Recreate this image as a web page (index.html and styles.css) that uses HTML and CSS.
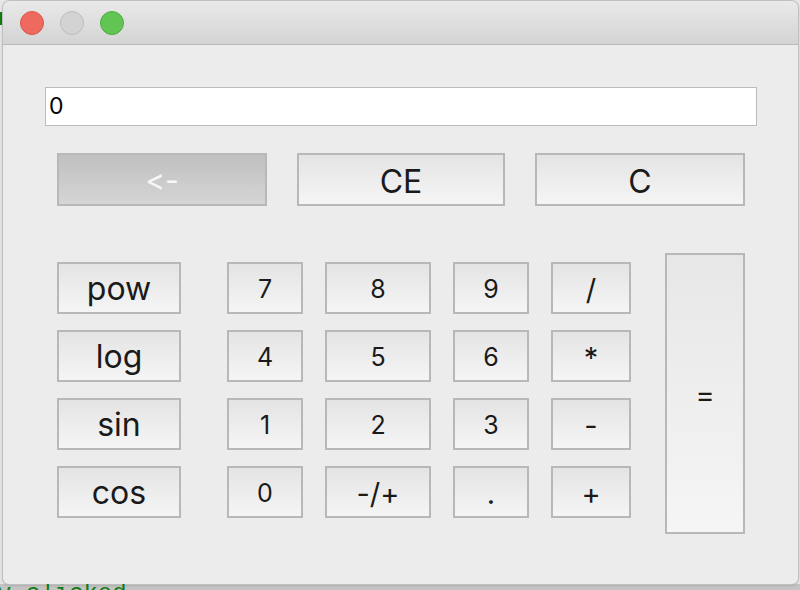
FILE: index.html
```html
<!DOCTYPE html>
<html>
<head>
<meta charset="utf-8">
<link rel="stylesheet" href="styles.css">
</head>
<body>
<div class="stage">
  <div class="gutter"><span class="mark"></span></div>
  <div class="window">
    <div class="titlebar">
      <span class="light red"></span>
      <span class="light gray"></span>
      <span class="light green"></span>
    </div>
    <div class="content">
      <div class="display">0</div>
      <div class="keys">
        <div class="toprow">
          <button class="btn back">&lt;-</button>
          <button class="btn big">CE</button>
          <button class="btn big">C</button>
        </div>
        <div class="keypad">
          <div class="fncol">
            <button class="btn fn">pow</button>
            <button class="btn fn">log</button>
            <button class="btn fn">sin</button>
            <button class="btn fn">cos</button>
          </div>
          <div class="numpad">
            <button class="btn num">7</button>
            <button class="btn num">8</button>
            <button class="btn num">9</button>
            <button class="btn num op">/</button>
            <button class="btn num">4</button>
            <button class="btn num">5</button>
            <button class="btn num">6</button>
            <button class="btn num op">*</button>
            <button class="btn num">1</button>
            <button class="btn num">2</button>
            <button class="btn num">3</button>
            <button class="btn num op">-</button>
            <button class="btn num">0</button>
            <button class="btn num op">-/+</button>
            <button class="btn num op">.</button>
            <button class="btn num op">+</button>
          </div>
          <button class="btn num op equals">=</button>
        </div>
      </div>
    </div>
  </div>
</div>
<div class="strip"><span class="code">y_clicked</span></div>
</body>
</html>
```

FILE: styles.css
```css
* { box-sizing: border-box; }
html, body { margin: 0; padding: 0; }
body {
  width: 800px;
  height: 590px;
  overflow: hidden;
  background: #e6e6e6;
  font-family: Inter, "Liberation Sans", sans-serif;
  font-feature-settings: "calt" 0, "liga" 0;
  font-variant-ligatures: none;
}
.stage {
  display: flex;
  align-items: flex-start;
  height: 584px;
}
.gutter {
  width: 3px;
  flex: none;
  padding-top: 12px;
}
.mark {
  display: block;
  width: 3px;
  height: 13px;
  background: #0f7d12;
}
.window {
  margin-top: 1px;
  width: 795px;
  height: 583px;
  background: #ececec;
  border-radius: 7px 7px 6px 6px;
  box-shadow: 0 0 0 1px #bfbfbf, 0 1px 3px rgba(0,0,0,0.25);
  overflow: hidden;
}
.titlebar {
  height: 44px;
  border-bottom: 1px solid #b9b9b9;
  background: linear-gradient(#e9e9e9, #d4d4d4);
  display: flex;
  align-items: center;
  gap: 16px;
  padding: 0 0 0 17px;
}
.light {
  width: 24px;
  height: 24px;
  border-radius: 50%;
  display: block;
}
.red { background: #ef6a5e; border: 1px solid #d9584d; }
.gray { background: #d3d3d3; border: 1px solid #bcbcbc; }
.green { background: #61c554; border: 1px solid #50ab42; }

.content {
  padding: 42px 41px 0 42px;
}
.display {
  height: 39px;
  background: #fff;
  border: 1px solid #bcbcbc;
  font-size: 23px;
  line-height: 37px;
  padding-left: 3px;
  color: #000;
}
.keys {
  padding: 0 12px;
  margin-top: 27px;
}
.toprow {
  display: grid;
  grid-template-columns: 210px 208px 210px;
  column-gap: 30px;
}
.btn {
  margin: 0;
  padding: 0;
  border: 2px solid #b8b8b8;
  border-radius: 0;
  background: linear-gradient(#e4e4e4, #f5f5f5);
  color: #1a1a1a;
  font-family: Inter, "Liberation Sans", sans-serif;
  font-feature-settings: "calt" 0, "liga" 0;
  font-variant-ligatures: none;
  display: flex;
  align-items: center;
  justify-content: center;
}
.toprow .btn { height: 53px; }
.big { font-size: 32px; padding-top: 3px; }
.back {
  background: linear-gradient(#c0c0c0, #d5d5d5);
  color: #f7f7f7;
  font-size: 30px;
  padding-top: 1px;
}
.keypad {
  display: flex;
  align-items: flex-start;
  margin-top: 47px;
}
.fncol {
  width: 124px;
  display: flex;
  flex-direction: column;
  gap: 16px;
  margin-top: 9px;
}
.fn {
  height: 52px;
  font-size: 32px;
  padding-top: 1px;
}
.numpad {
  margin-left: 46px;
  margin-top: 9px;
  display: grid;
  grid-template-columns: 76px 106px 76px 80px;
  grid-auto-rows: 52px;
  gap: 16px 22px;
}
.num { font-size: 25px; padding-top: 2px; }
.op { font-size: 29px; }
.equals {
  margin-left: 34px;
  width: 80px;
  height: 281px;
  background: linear-gradient(#e7e7e7, #f5f5f5);
}
.strip {
  height: 6px;
  overflow: hidden;
  background: #c4c4c4;
}
.code {
  display: block;
  margin-top: -2px;
  margin-left: -3px;
  font-family: "Liberation Mono", monospace;
  font-size: 24px;
  line-height: 24px;
  color: #0f7d12;
}
```
